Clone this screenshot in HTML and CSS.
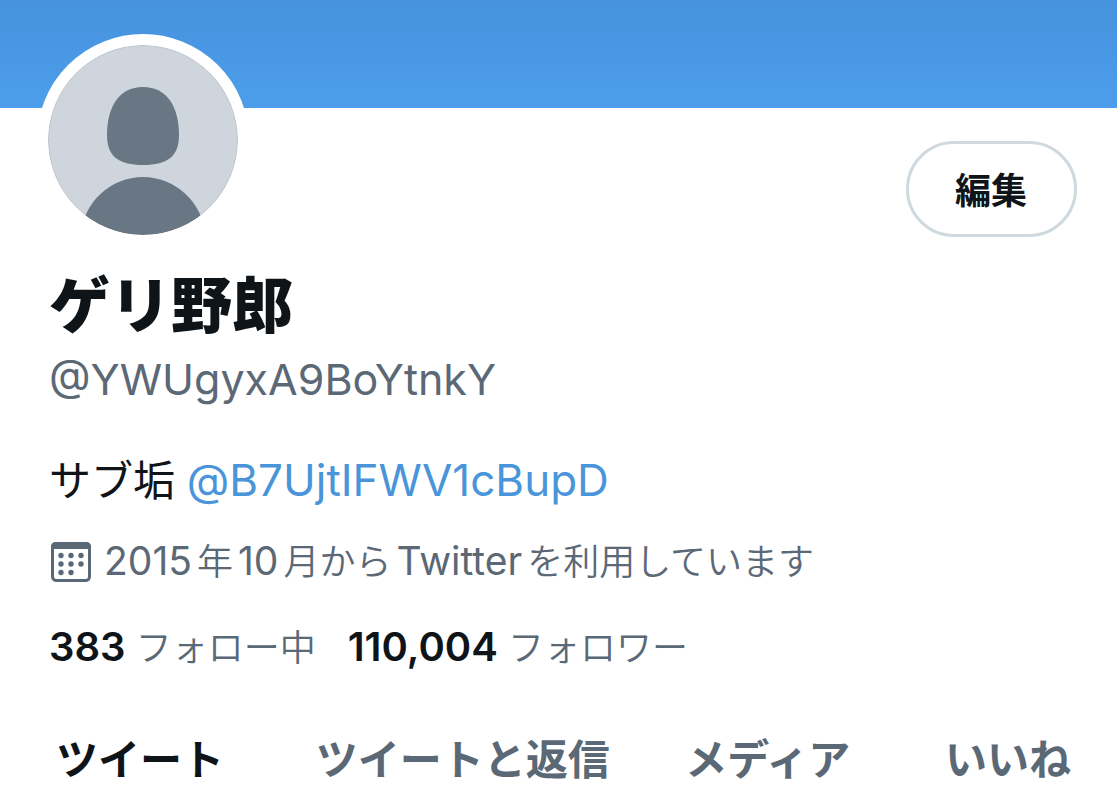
FILE: index.html
```html
<!DOCTYPE html>
<html lang="ja">
<head>
    <meta charset="UTF-8">
    <meta name="viewport" content="width=device-width, initial-scale=1.0">
    <title>ゲリ野郎</title>
    <link rel="stylesheet" href="styles.css">
</head>
<body>
    <div class="banner"></div>

    <main class="profile">
        <div class="profile-top">
            <svg class="avatar" viewBox="0 0 190 190" aria-hidden="true">
                <clipPath id="avatar-clip"><circle cx="95" cy="95" r="95"/></clipPath>
                <circle cx="95" cy="95" r="94.5" fill="#ced5dd" stroke="#bcc2c8"/>
                <g clip-path="url(#avatar-clip)" fill="#697684">
                    <path d="M95 42C119 42 131 62 131 90C131 111 120 120 95 120C70 120 59 111 59 90C59 62 71 42 95 42Z"/>
                    <path d="M33 190C35 157 63 132 95 132C127 132 155 157 157 190Z"/>
                </g>
            </svg>
            <button class="edit" type="button">編集</button>
        </div>

        <h1 class="name">ゲリ野郎</h1>
        <p class="handle">@YWUgyxA9BoYtnkY</p>
        <p class="bio">サブ垢 <a href="#">@B7UjtIFWV1cBupD</a></p>

        <p class="joined">
            <svg class="calendar" viewBox="0 0 40 40" aria-hidden="true">
                <rect x="1.5" y="1.5" width="37" height="37" rx="4" fill="none" stroke="currentColor" stroke-width="3"/>
                <path d="M0 7V5Q0 0 5 0H35Q40 0 40 5V7Z" fill="currentColor"/>
                <g fill="currentColor">
                    <circle cx="10" cy="13.5" r="2.7"/>
                    <circle cx="20" cy="13.5" r="2.7"/>
                    <circle cx="30" cy="13.5" r="2.7"/>
                    <circle cx="10" cy="22" r="2.7"/>
                    <circle cx="20" cy="22" r="2.7"/>
                    <circle cx="30" cy="22" r="2.7"/>
                    <circle cx="10" cy="30.5" r="2.7"/>
                    <circle cx="20" cy="30.5" r="2.7"/>
                </g>
            </svg>
            <span><span class="latin">2015</span>年<span class="latin">10</span>月から<span class="latin">Twitter</span>を利用しています</span>
        </p>

        <div class="counts">
            <a href="#"><strong>383</strong> フォロー中</a>
            <a href="#"><strong>110,004</strong> フォロワー</a>
        </div>
    </main>

    <nav class="tabs">
        <a class="active" href="#">ツイート</a>
        <a href="#">ツイートと返信</a>
        <a href="#">メディア</a>
        <a href="#">いいね</a>
    </nav>
</body>
</html>
```
FILE: styles.css
```css
body {
    margin: 0;
    background-color: #fff;
    color: #0f1419;
    font-family: Inter, "Noto Sans CJK JP", sans-serif;
}
h1, p {
    margin: 0;
}
a {
    color: inherit;
    text-decoration: none;
}
.banner {
    height: 108px;
    background: linear-gradient(#4692de, #4c9eeb);
}
.profile {
    padding: 0 40px 0 49px;
}
.profile-top {
    display: flex;
    justify-content: space-between;
    align-items: center;
    margin-top: -74px;
}
.avatar {
    width: 190px;
    height: 190px;
    margin-left: -12px;
    border: 11px solid #fff;
    border-radius: 50%;
    background-color: #fff;
}
.edit {
    margin-top: 98px;
    padding: 0 47px 2px 46px;
    height: 96px;
    border: 3px solid #cfd9de;
    border-radius: 48px;
    background-color: #fff;
    color: #0f1419;
    font-family: inherit;
    font-size: 36px;
    font-weight: 700;
    cursor: pointer;
}
.name {
    margin-top: 24px;
    font-size: 61px;
    font-weight: 900;
    line-height: 72px;
}
.handle {
    margin-top: 9px;
    color: #5b6876;
    font-size: 43px;
    line-height: 56px;
}
.bio {
    margin-top: 45px;
    font-size: 42px;
    line-height: 56px;
}
.bio a {
    color: #4a95d9;
    font-size: 44px;
}
.joined {
    display: flex;
    align-items: center;
    gap: 8px;
    margin-top: 28px;
    padding-left: 2px;
    color: #5b6876;
    font-size: 36px;
    font-weight: 350;
    line-height: 48px;
}
.latin {
    margin: 0 5px;
    font-size: 39px;
    font-weight: 400;
}
.calendar {
    width: 40px;
    height: 40px;
}
.counts {
    display: flex;
    gap: 32px;
    margin-top: 37px;
    color: #5b6876;
    font-size: 36px;
    font-weight: 350;
    line-height: 48px;
}
.counts strong {
    color: #0f1419;
    font-size: 40px;
    font-weight: 600;
}
.tabs {
    display: grid;
    grid-template-columns: 260fr 370fr 260fr auto;
    margin-top: 60px;
    padding: 0 46px 0 56px;
    color: #5b6876;
    font-size: 42px;
    font-weight: 700;
    line-height: 56px;
    white-space: nowrap;
}
.tabs .active {
    color: #0f1419;
}
```
